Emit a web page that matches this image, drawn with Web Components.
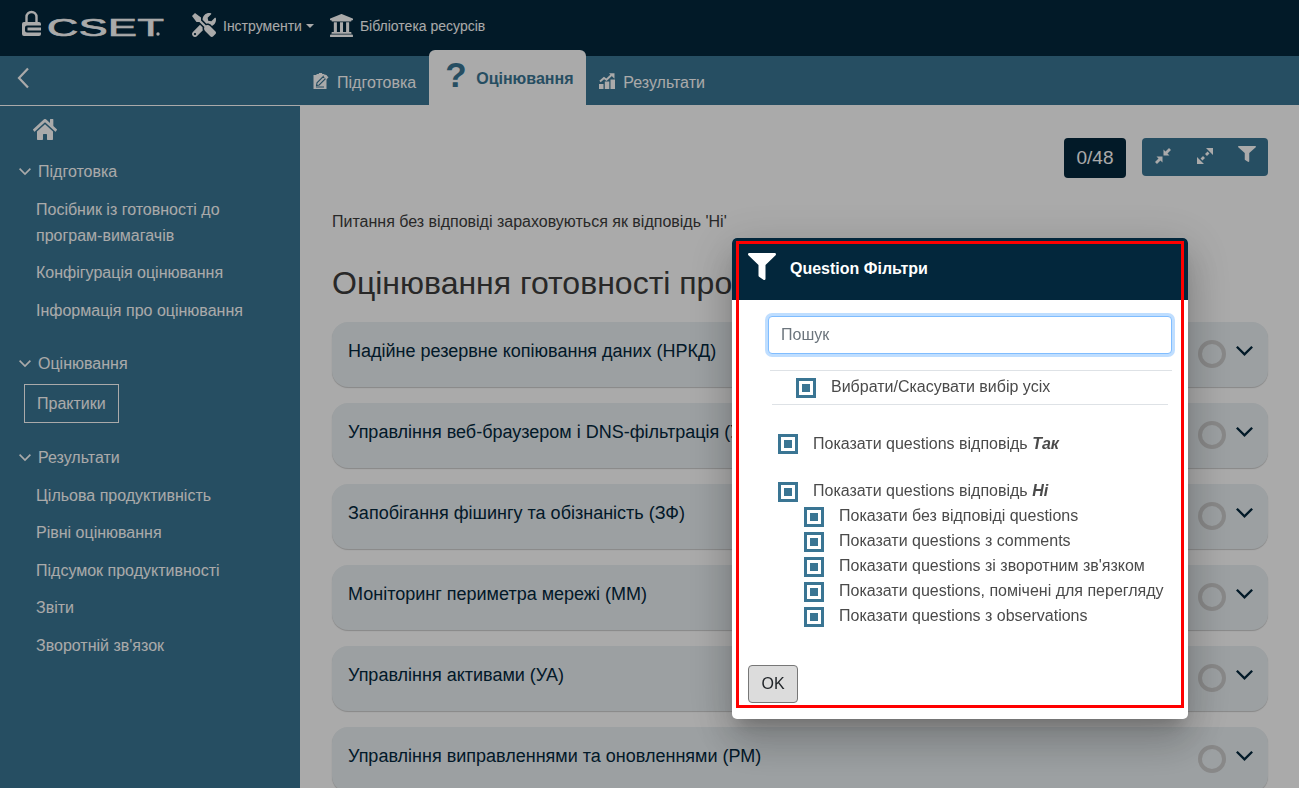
<!DOCTYPE html>
<html lang="uk">
<head>
<meta charset="utf-8">
<title>CSET</title>
<style>
  html, body {
    margin: 0;
    height: 788px;
    overflow: hidden;
    background: #fff;
    font-family: "Liberation Sans", Arial, sans-serif;
    font-size: 16px;
  }
</style>
</head>
<body>
<cset-app>
  <cset-topbar slot="top"></cset-topbar>
  <cset-tabs slot="top"></cset-tabs>
  <cset-sidebar slot="side">
    <side-group label="Підготовка">
      <side-item>Посібник із готовності до програм-вимагачів</side-item>
      <side-item>Конфігурація оцінювання</side-item>
      <side-item>Інформація про оцінювання</side-item>
    </side-group>
    <side-group label="Оцінювання">
      <side-item active>Практики</side-item>
    </side-group>
    <side-group label="Результати">
      <side-item>Цільова продуктивність</side-item>
      <side-item>Рівні оцінювання</side-item>
      <side-item>Підсумок продуктивності</side-item>
      <side-item>Звіти</side-item>
      <side-item>Зворотній зв'язок</side-item>
    </side-group>
  </cset-sidebar>
  <cset-main slot="main">
    <practice-card>Надійне резервне копіювання даних (НРКД)</practice-card>
    <practice-card>Управління веб-браузером і DNS-фільтрація (УВБ)</practice-card>
    <practice-card>Запобігання фішингу та обізнаність (ЗФ)</practice-card>
    <practice-card>Моніторинг периметра мережі (ММ)</practice-card>
    <practice-card>Управління активами (УА)</practice-card>
    <practice-card>Управління виправленнями та оновленнями (РМ)</practice-card>
  </cset-main>
</cset-app>
<filter-dialog>
  <check-row slot="all">Вибрати/Скасувати вибір усіх</check-row>
  <check-row slot="yes">Показати questions відповідь&nbsp;<b><i>Так</i></b></check-row>
  <check-row slot="no">Показати questions відповідь&nbsp;<b><i>Ні</i></b></check-row>
  <check-row slot="sub">Показати без відповіді questions</check-row>
  <check-row slot="sub">Показати questions з comments</check-row>
  <check-row slot="sub">Показати questions зі зворотним зв'язком</check-row>
  <check-row slot="sub">Показати questions, помічені для перегляду</check-row>
  <check-row slot="sub">Показати questions з observations</check-row>
</filter-dialog>

<script>
  // filled FontAwesome style glyphs, used by several elements
  const FILTER_PATH = "M487.976 0H24.028C2.71 0-8.047 25.866 7.058 40.971L192 225.941V432c0 7.831 3.821 15.17 10.237 19.662l80 55.98C298.02 518.69 320 507.493 320 487.98V225.941l184.947-184.97C520.021 25.896 509.338 0 487.976 0z";
  const CHEVRON = `<svg viewBox="0 0 16 16" fill="none" stroke="currentColor" stroke-width="2.2"><path d="M.8 3.5 8 10.700l7.200-7.200"/></svg>`;

  class ShadowElement extends HTMLElement {
    connectedCallback() {
      if (this.shadowRoot) return;
      this.attachShadow({ mode: "open" });
      this.shadowRoot.innerHTML = this.render();
    }
  }

  customElements.define("cset-app", class extends ShadowElement {
    render() {
      return `<style>
        :host { display: flex; flex-direction: column; height: 788px; overflow: hidden; }
        .body { display: flex; flex: 1; min-height: 0; }
      </style>
      <slot name="top"></slot>
      <div class="body"><slot name="side"></slot><slot name="main"></slot></div>`;
    }
  });

  customElements.define("cset-topbar", class extends ShadowElement {
    render() {
      return `<style>
        :host { display: flex; align-items: center; height: 50px; background: #03273c; color: #fff; font-size: 14px; flex: none; }
        .logo { margin-left: 22px; display: block; overflow: visible; flex: none; }
        .logo text { font-family: "Liberation Sans", sans-serif; font-weight: 400; fill: #fff; stroke: #fff; stroke-width: .7px; }
        .menu { display: flex; align-items: center; }
        .menu span { padding-top: 2px; }
        .tools { margin-left: 25px; }
        .tools svg { margin-right: 7px; }
        .menu .caret { width: 0; height: 0; padding: 0; margin-left: 4px; margin-top: 2px; border: 4px solid transparent; border-top-color: #fff; border-bottom: 0; }
        .library { margin-left: 16px; }
        .library svg { margin-right: 7px; }
        svg { display: block; fill: #fff; }
      </style>
      <svg class="logo" width="145" height="30" viewBox="0 0 145 30">
        <path d="M4.500 12.500V7a5 5 0 0 1 10 0v5.500" fill="none" stroke="#fff" stroke-width="2.400"/>
        <path fill-rule="evenodd" d="M2 12h15a2 2 0 0 1 2 2v10a2 2 0 0 1-2 2H2a2 2 0 0 1-2-2V14a2 2 0 0 1 2-2zm3 3.500a2 2 0 0 0-2 2v3a2 2 0 0 0 2 2h14v-2H5.500v-3H19v-2z"/>
        <text transform="translate(25 26) scale(1.8 1)" font-size="24" letter-spacing=".3">CSET</text>
        <circle cx="136" cy="24" r="1.700"/>
      </svg>
      <div class="menu tools">
        <svg width="24" height="24" viewBox="0 0 512 512"><path d="M501.1 395.7L384 278.6c-23.1-23.1-57.6-27.6-85.4-13.9L192 158.1V96L64 0 0 64l96 128h62.1l106.6 106.6c-13.6 27.8-9.2 62.3 13.9 85.4l117.1 117.1c14.6 14.6 38.2 14.6 52.7 0l52.7-52.7c14.5-14.6 14.5-38.2 0-52.7zM331.7 225c28.3 0 54.9 11 74.9 31l19.4 19.4c15.8-6.9 30.8-16.5 43.8-29.5 37.1-37.1 49.7-89.3 37.9-136.7-2.2-9-13.5-12.1-20.1-5.5l-74.4 74.4-67.9-11.3L334 98.9l74.4-74.4c6.6-6.6 3.4-17.9-5.7-20.2-47.4-11.7-99.6.9-136.6 37.9-28.5 28.5-41.9 66.1-41.2 103.6l82.1 82.1c8.1-1.9 16.5-2.9 24.7-2.9zm-103.9 82l-56.7-56.7L18.7 402.8c-25 25-25 65.5 0 90.5s65.5 25 90.5 0l123.6-123.6c-7.6-19.9-9.9-41.6-5-62.7zM64 472c-13.2 0-24-10.8-24-24 0-13.3 10.7-24 24-24s24 10.7 24 24c0 13.2-10.7 24-24 24z"/></svg>
        <span>Інструменти</span><span class="caret"></span>
      </div>
      <div class="menu library">
        <svg width="23" height="23" viewBox="16 32 480 448" preserveAspectRatio="none"><path d="M496 128v16a8 8 0 0 1-8 8h-24v12c0 6.627-5.373 12-12 12H60c-6.627 0-12-5.373-12-12v-12H24a8 8 0 0 1-8-8v-16a8 8 0 0 1 4.941-7.392l232-88a7.996 7.996 0 0 1 6.118 0l232 88A8 8 0 0 1 496 128zm-24 304H40c-13.255 0-24 10.745-24 24v16a8 8 0 0 0 8 8h464a8 8 0 0 0 8-8v-16c0-13.255-10.745-24-24-24zM96 192v192H60c-6.627 0-12 5.373-12 12v20h416v-20c0-6.627-5.373-12-12-12h-36V192h-64v192h-64V192h-64v192h-64V192H96z"/></svg>
        <span>Бібліотека ресурсів</span>
      </div>`;
    }
  });

  customElements.define("cset-tabs", class extends ShadowElement {
    render() {
      return `<style>
        :host { display: flex; height: 55px; flex: none; position: relative; color: #fff; background: linear-gradient(#03273c 6px, #3a7593 6px); }
        .back { position: absolute; left: 15px; top: 15px; }
        .tab { display: flex; align-items: center; padding-top: 10px; box-sizing: border-box; height: 55px; }
        .tab svg { margin-top: -4px; }
        .prep { margin-left: 313px; }
        .prep svg { margin-right: 8px; }
        .active { margin-left: 13px; width: 157px; padding-left: 16px; background: #fff; border-radius: 6px 6px 0 0; color: #3a7593; font-weight: 700; }
        .mark { font-size: 35px; line-height: 40px; margin-right: 11px; margin-top: -16px; width: 20px; }
        .active span:last-child { margin-top: -7px; }
        .results { margin-left: 13px; }
        .results svg { margin-right: 8px; }
        svg { display: block; }
      </style>
      <svg class="back" width="18" height="26" viewBox="0 0 18 26" fill="none" stroke="#fff" stroke-width="2.2"><path d="M13 3.5 4 13l9 9.5"/></svg>
      <div class="tab prep">
        <svg width="16" height="16" viewBox="0 0 16 16">
          <path fill="#fff" d="M.5 2h3V1h2.300a1.700 1.700 0 0 1 3.400 0h2.300v1h2v14H.5z"/>
          <path fill="none" stroke="#3a7593" stroke-width="1.100" d="M3.500 12.500l.5-2.700L10.500 3.300l2.200 2.200-6.500 6.500zM3 14h8"/>
          <path fill="#fff" d="M12.500 1.500l3 2.700-2 2.300-3-2.800z"/>
        </svg>
        <span>Підготовка</span>
      </div>
      <div class="tab active"><span class="mark">?</span><span>Оцінювання</span></div>
      <div class="tab results">
        <svg width="16" height="16" viewBox="0 0 16 16" fill="#fff">
          <rect x="0" y="11" width="4.500" height="5"/><rect x="5.800" y="8.500" width="4.500" height="7.500"/><rect x="11.500" y="6.500" width="4.500" height="9.500"/>
          <path fill="none" stroke="#fff" stroke-width="2" d="M1 8.500l4-3.500 2.500 1.800L12.500 2"/>
          <path d="M10 .2h5.500v5.500z"/>
        </svg>
        <span>Результати</span>
      </div>`;
    }
  });

  customElements.define("cset-sidebar", class extends ShadowElement {
    render() {
      return `<style>
        :host { display: block; flex: none; width: 300px; box-sizing: border-box; background: #3a7593; border-top: 1px solid #fff; color: #fff; }
        .home { height: 47.3px; display: flex; align-items: center; padding-left: 33px; box-sizing: border-box; }
        svg { display: block; fill: #fff; }
      </style>
      <div class="home"><svg width="24" height="21" viewBox="0 32 576 448" preserveAspectRatio="none"><path d="M280.37 148.26L96 300.11V464a16 16 0 0 0 16 16l112.06-.29a16 16 0 0 0 15.92-16V368a16 16 0 0 1 16-16h64a16 16 0 0 1 16 16v95.64a16 16 0 0 0 16 16.05L464 480a16 16 0 0 0 16-16V300L295.67 148.26a12.19 12.19 0 0 0-15.3 0zM571.6 251.47L488 182.56V44.05a12 12 0 0 0-12-12h-56a12 12 0 0 0-12 12v72.61L318.47 43a48 48 0 0 0-61 0L4.34 251.47a12 12 0 0 0-1.6 16.9l25.5 31A12 12 0 0 0 45.15 301l235.22-193.74a12.19 12.19 0 0 1 15.3 0L530.9 301a12 12 0 0 0 16.9-1.6l25.5-31a12 12 0 0 0-1.7-16.93z"/></svg></div>
      <slot></slot>`;
    }
  });

  customElements.define("side-group", class extends ShadowElement {
    render() {
      return `<style>
        :host { display: block; margin-bottom: 15.5px; }
        .head { display: flex; align-items: center; height: 38px; padding-left: 19px; gap: 7px; }
        svg { display: block; width: 12px; height: 12px; flex: none; }
      </style>
      <div class="head">${CHEVRON}<span>${this.getAttribute("label")}</span></div>
      <slot></slot>`;
    }
  });

  customElements.define("side-item", class extends ShadowElement {
    render() {
      return `<style>
        :host { display: block; line-height: 25.6px; padding: 6px 50px 6px 36px; }
        :host([active]) { width: fit-content; margin: 1px 0 0 24px; padding: 6px 12px; border: 1px solid #fff; line-height: 25px; }
      </style><slot></slot>`;
    }
  });

  customElements.define("cset-main", class extends ShadowElement {
    render() {
      return `<style>
        :host { display: block; flex: 1; min-width: 0; padding: 33px 31px 0 32px; color: #3c3c3c; }
        .tools { display: flex; justify-content: flex-end; gap: 16px; height: 40px; align-items: flex-start; }
        .count { width: 62px; height: 40px; box-sizing: border-box; background: #03273c; color: #fff; border-radius: 4px; font-size: 19px; display: flex; align-items: center; justify-content: center; }
        .group { display: flex; width: 126px; height: 38px; background: #3a7593; border-radius: 4px; align-items: center; color: #fff; }
        .group div { flex: 1; display: flex; justify-content: center; padding-bottom: 2px; }
        .group div:last-child { padding-bottom: 6px; }
        svg { display: block; }
        .note { margin: 32px 0 0; line-height: 24px; }
        h1 { margin: 30px 0 20px; font-weight: 400; font-size: 32px; line-height: 38px; white-space: nowrap; }
      </style>
      <div class="tools">
        <div class="count">0/48</div>
        <div class="group">
          <div><svg width="16" height="16" viewBox="0 0 16 16" fill="none" stroke="#fff" stroke-width="2.800"><path d="M15 1 11 5M1 15l4-4"/><path fill="#fff" stroke="none" d="M8.500 1.500v6h6zM7.500 14.500v-6h-6z"/></svg></div>
          <div><svg width="16" height="16" viewBox="0 0 16 16" fill="none" stroke="#fff" stroke-width="2.800"><path d="M4.500 11.500 7 9M11.500 4.500 9 7"/><path fill="#fff" stroke="none" d="M9 0h7v7zM0 16V9l7 7z"/></svg></div>
          <div><svg width="18" height="16" viewBox="0 0 512 512" preserveAspectRatio="none" fill="#fff"><path d="${FILTER_PATH}"/></svg></div>
        </div>
      </div>
      <p class="note">Питання без відповіді зараховуються як відповідь 'Ні'</p>
      <h1>Оцінювання готовності програм-вимагачів</h1>
      <slot></slot>`;
    }
  });

  customElements.define("practice-card", class extends ShadowElement {
    render() {
      return `<style>
        :host { display: flex; align-items: flex-start; height: 65px; box-sizing: border-box; margin-bottom: 16px; padding: 16px 15px 0 16px; background: #eaf0f3; border-radius: 16px; box-shadow: 0 1px 1px rgba(0,0,0,.2); color: #03273c; font-size: 18px; line-height: 24px; white-space: nowrap; }
        .title { flex: 1; min-width: 0; padding-top: .6px; }
        .ring { width: 28px; height: 28px; box-sizing: border-box; margin-top: 2px; border: 4px solid #ccc; border-radius: 50%; flex: none; }
        svg { display: block; width: 17px; height: 17px; margin: 5px 0 0 10px; flex: none; }
      </style>
      <div class="title"><slot></slot></div><div class="ring"></div>${CHEVRON}`;
    }
  });

  customElements.define("check-row", class extends ShadowElement {
    render() {
      return `<style>
        :host { display: flex; align-items: flex-start; height: 25px; color: #4a4a4a; line-height: 18px; white-space: nowrap; }
        :host([slot="yes"]) { line-height: 20px; }
        .box { flex: none; width: 20px; height: 20px; box-sizing: border-box; border: 3px solid #3a7593; display: flex; align-items: center; justify-content: center; margin-right: 15px; }
        .box::after { content: ""; width: 8px; height: 8px; background: #3a7593; }
      </style><span class="box"></span><span><slot></slot></span>`;
    }
  });

  customElements.define("filter-dialog", class extends ShadowElement {
    render() {
      return `<style>
        :host { position: fixed; inset: 0; background: rgba(0,0,0,.333); display: block; }
        .dialog { position: absolute; left: 732px; top: 238px; width: 456px; height: 481px; background: #fff; border-radius: 5px; box-shadow: 0 11px 15px -7px rgba(0,0,0,.2), 0 24px 38px 3px rgba(0,0,0,.14), 0 9px 46px 8px rgba(0,0,0,.12); }
        .head { display: flex; align-items: center; height: 62px; padding-left: 16px; background: #03273c; border-radius: 5px 5px 0 0; color: #fff; font-weight: 700; font-size: 16px; }
        .head svg { display: block; margin: -6px 14px 0 0; fill: #fff; }
        input { display: block; width: 404px; height: 38px; box-sizing: border-box; margin: 16px 0 0 36px; padding: 0 12px; border: 1px solid #80bdff; border-radius: 4px; outline: none; box-shadow: 0 0 0 3px rgba(0,123,255,.25); font: 16px "Liberation Sans", sans-serif; }
        input::placeholder { color: #6c757d; opacity: 1; }
        .all { margin: 16px 16px 0 38px; border-top: 1px solid #dee2e6; }
        .all div { margin: 0 4px 0 2px; padding: 7px 0 0 24px; height: 26px; border-bottom: 1px solid #dee2e6; }
        .opts { padding-left: 46px; margin-top: 29px; }
        .no { margin-top: 23px; }
        .subs { padding-left: 26px; }
        button { display: block; margin: 33px 0 0 16px; width: 50px; height: 38px; background: #dcdcdc; border: 1px solid #777; border-radius: 4px; color: #212529; font: 16px "Liberation Sans", sans-serif; padding: 0; }
        .mark { position: absolute; left: 4px; top: 3px; width: 448px; height: 467px; box-sizing: border-box; border: 3px solid #f00; pointer-events: none; }
      </style>
      <div class="dialog">
        <div class="head"><svg width="28" height="27" viewBox="0 0 512 512" preserveAspectRatio="none"><path d="${FILTER_PATH}"/></svg><span>Question Фільтри</span></div>
        <input placeholder="Пошук">
        <div class="all"><div><slot name="all"></slot></div></div>
        <div class="opts">
          <slot name="yes"></slot>
          <div class="no"><slot name="no"></slot></div>
          <div class="subs"><slot name="sub"></slot></div>
        </div>
        <button>OK</button>
        <div class="mark"></div>
      </div>`;
    }
  });
</script>
</body>
</html>
